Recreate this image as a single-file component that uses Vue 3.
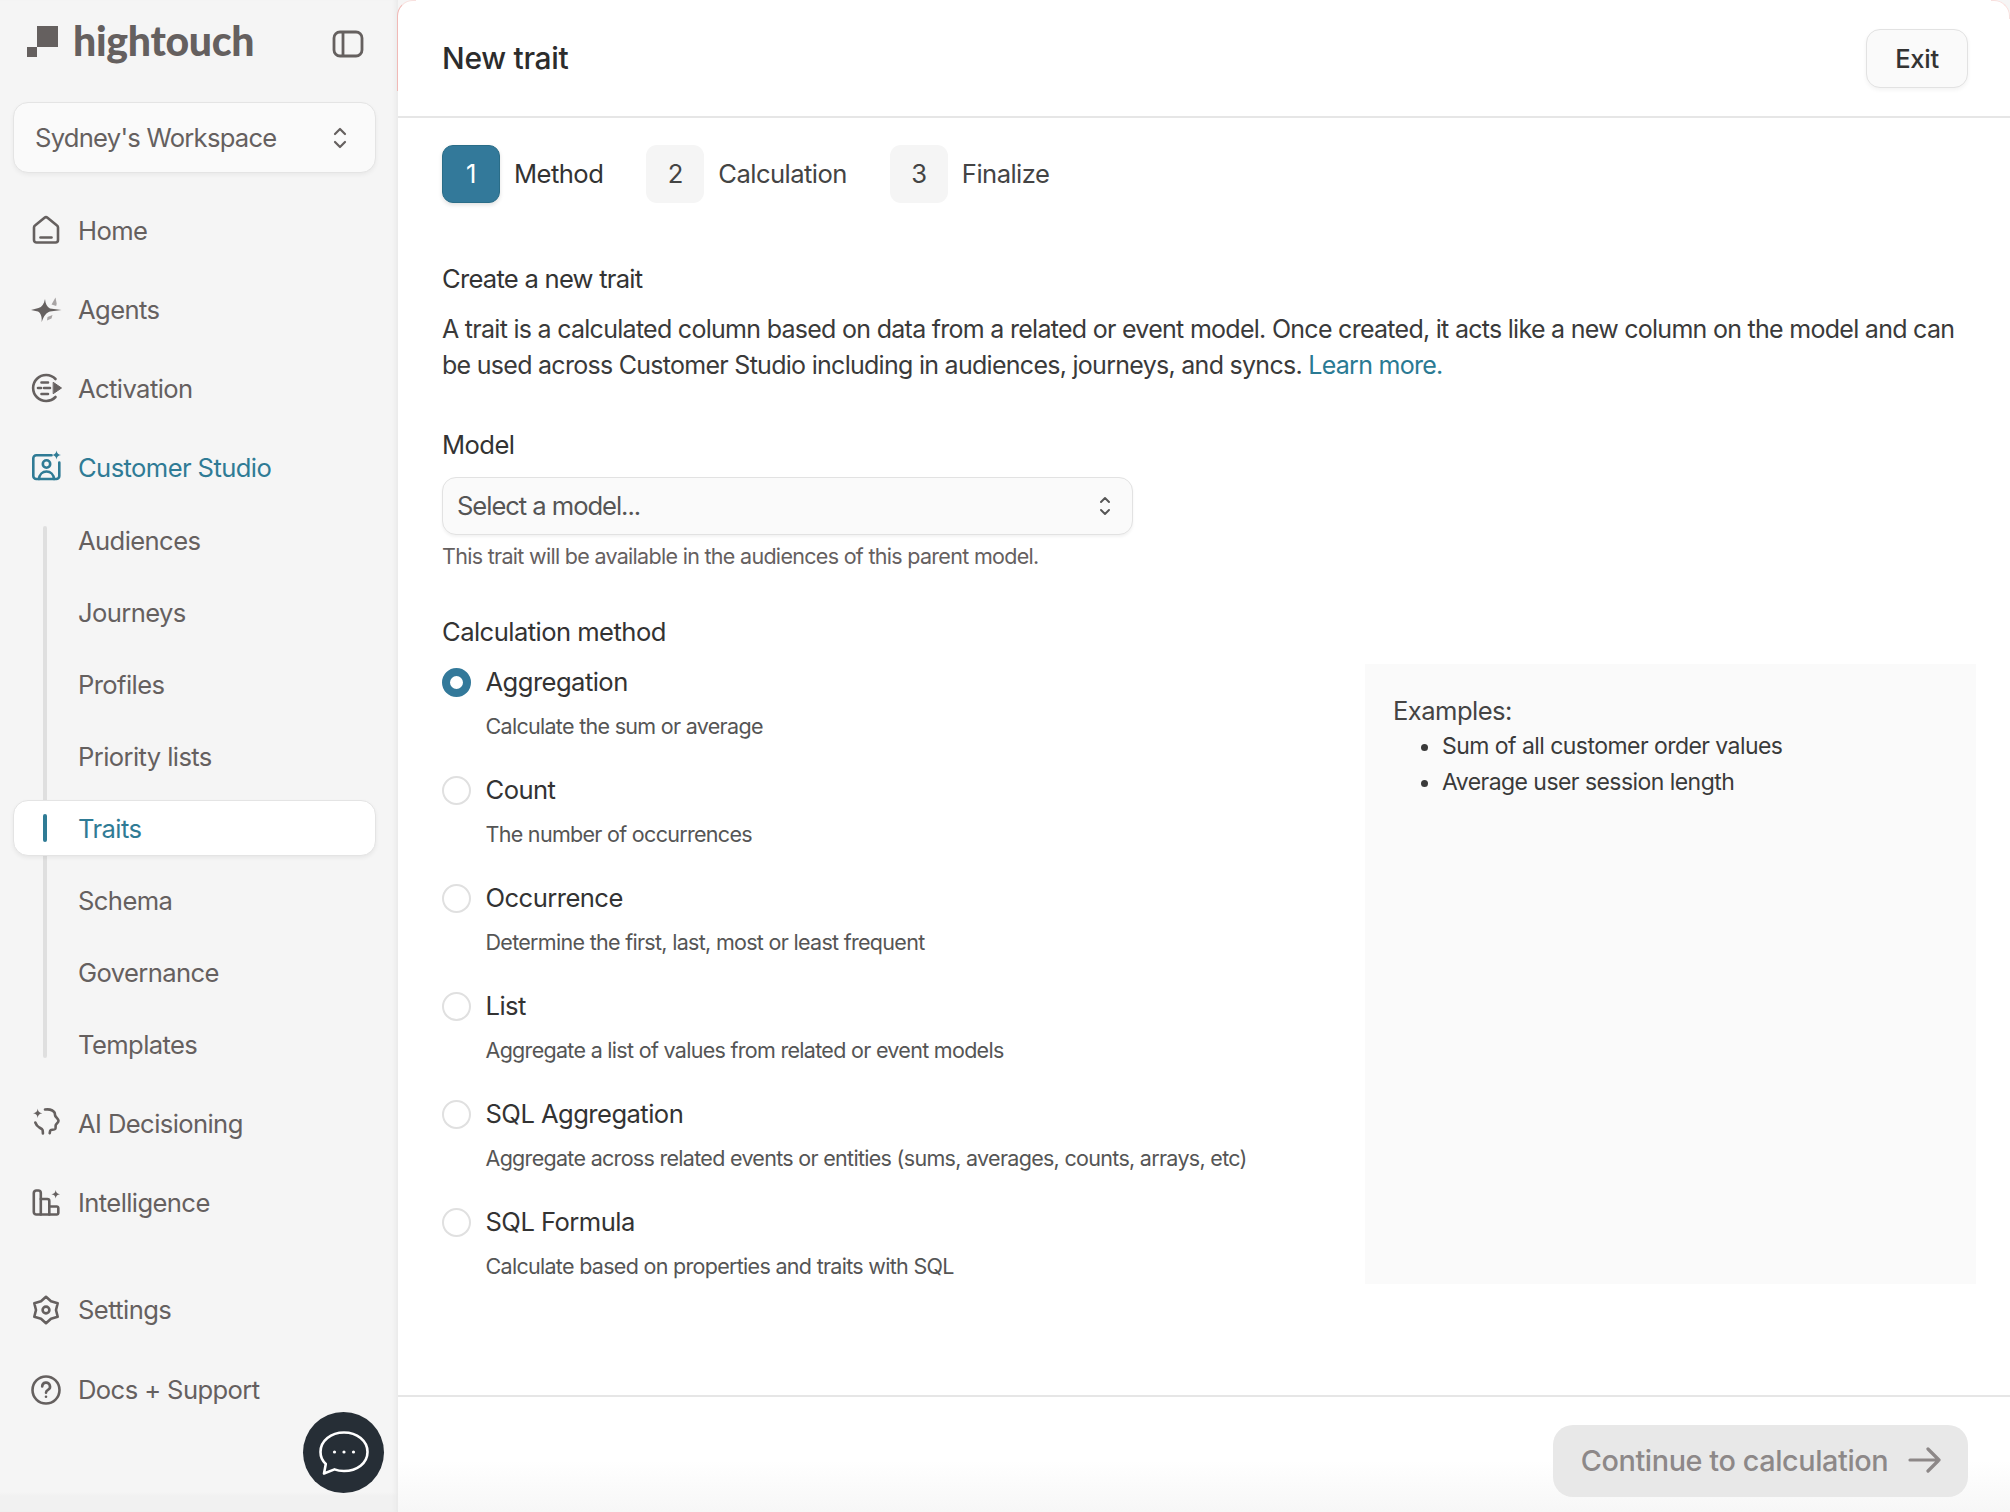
<template>
  <div class="page">
    <aside class="side">
      <div class="brand">
        <svg class="logo" width="32" height="32" viewBox="0 0 32 32">
          <rect x="10" y="0" width="21" height="21" fill="#65605f" />
          <rect x="0" y="21" width="10" height="10" fill="#65605f" />
        </svg>
        <span class="brand-name">hightouch</span>
        <svg class="panel-icon" width="32" height="28" viewBox="0 0 32 28" fill="none" stroke="currentColor" stroke-width="2.8">
          <rect x="2" y="2" width="28" height="24" rx="6" />
          <path d="M11 2v24" />
        </svg>
      </div>

      <button class="workspace">
        <span>Sydney's Workspace</span>
        <svg width="16" height="24" viewBox="0 0 16 24" fill="none" stroke="currentColor" stroke-width="2.2" stroke-linecap="round" stroke-linejoin="round">
          <path d="M3 8l5-5 5 5M3 16l5 5 5-5" />
        </svg>
      </button>

      <nav class="nav">
        <div v-for="item in topItems" :key="item.label" class="nav-row" :class="{ active: item.active }">
          <svg class="nav-icon" width="30" height="30" viewBox="0 0 30 30" fill="none" stroke="currentColor" stroke-width="2.6" stroke-linecap="round" stroke-linejoin="round" v-html="icons[item.icon]"></svg>
          <span>{{ item.label }}</span>
        </div>
        <div class="subnav">
          <div v-for="sub in subItems" :key="sub" class="sub-row" :class="{ current: sub === 'Traits' }">{{ sub }}</div>
        </div>
        <div v-for="item in lowerItems" :key="item.label" class="nav-row">
          <svg class="nav-icon" width="30" height="30" viewBox="0 0 30 30" fill="none" stroke="currentColor" stroke-width="2.6" stroke-linecap="round" stroke-linejoin="round" v-html="icons[item.icon]"></svg>
          <span>{{ item.label }}</span>
        </div>
      </nav>

      <nav class="nav nav-bottom">
        <div v-for="item in bottomItems" :key="item.label" class="nav-row">
          <svg class="nav-icon" width="30" height="30" viewBox="0 0 30 30" fill="none" stroke="currentColor" stroke-width="2.6" stroke-linecap="round" stroke-linejoin="round" v-html="icons[item.icon]"></svg>
          <span>{{ item.label }}</span>
        </div>
      </nav>
    </aside>

    <main class="main">
      <header class="top">
        <h1>New trait</h1>
        <button class="exit">Exit</button>
      </header>

      <section class="content">
        <div class="steps">
          <div v-for="(step, i) in steps" :key="step" class="step" :class="{ on: i === 0 }">
            <span class="step-num">{{ i + 1 }}</span>
            <span>{{ step }}</span>
          </div>
        </div>

        <h2 class="intro-title">Create a new trait</h2>
        <p class="intro">
          A trait is a calculated column based on data from a related or event model. Once created, it acts like a new column on the model and can
          be used across Customer Studio including in audiences, journeys, and syncs. <a class="link">Learn more.</a>
        </p>

        <label class="field-label">Model</label>
        <div class="select">
          <span>Select a model...</span>
          <svg width="14" height="22" viewBox="0 0 14 22" fill="none" stroke="currentColor" stroke-width="1.9" stroke-linecap="round" stroke-linejoin="round">
            <path d="M3 7l4-4 4 4M3 15l4 4 4-4" />
          </svg>
        </div>
        <p class="hint">This trait will be available in the audiences of this parent model.</p>

        <label class="field-label method-label">Calculation method</label>
        <div class="method-grid">
          <div class="options">
            <div v-for="(opt, i) in options" :key="opt.name" class="option">
              <div class="option-head">
                <span class="radio" :class="{ checked: i === 0 }"></span>
                <span>{{ opt.name }}</span>
              </div>
              <div class="option-desc">{{ opt.desc }}</div>
            </div>
          </div>
          <div class="examples">
            <div>Examples:</div>
            <ul>
              <li>Sum of all customer order values</li>
              <li>Average user session length</li>
            </ul>
          </div>
        </div>
      </section>

      <footer class="foot">
        <button class="next">
          <span>Continue to calculation</span>
          <svg width="34" height="26" viewBox="0 0 34 26" fill="none" stroke="currentColor" stroke-width="3.2" stroke-linecap="round" stroke-linejoin="round">
            <path d="M2 13h29M20 2l11 11-11 11" />
          </svg>
        </button>
      </footer>
    </main>

    <button class="chat">
      <svg width="52" height="46" viewBox="0 0 52 46" fill="none" stroke="#fff" stroke-width="2.6" stroke-linejoin="round">
        <path d="M26 2.500c13 0 23.500 8.400 23.500 19.500S39 41 26 41c-3.400 0-6.600-.5-9.500-1.600L6 43.500l1.800-9.500C4 30.500 2.500 26.400 2.500 22 2.500 10.900 13 2.500 26 2.500z" />
        <circle cx="16.500" cy="22" r="1.600" fill="#fff" stroke="none" />
        <circle cx="26" cy="22" r="1.600" fill="#fff" stroke="none" />
        <circle cx="35.500" cy="22" r="1.600" fill="#fff" stroke="none" />
      </svg>
    </button>
  </div>
</template>

<script setup>
// icon bodies, all on a 30x30 box
const icons = {
  home: '<path d="M3 12.500c0-.8.300-1.500 1-2L13.500 2.800a2.400 2.400 0 0 1 3 0L26 10.500c.7.500 1 1.200 1 2V25a2.500 2.500 0 0 1-2.500 2.500h-19A2.500 2.500 0 0 1 3 25z"/><path d="M9.500 22.500h11"/>',
  agents:
    '<path d="M14 5c.5 5 2 8 5 9.500L30.500 16l-11.500 1.500c-3.500 1-6 4-8.300 10.500 .3-5-.5-8.500-3.700-10.500L0 16l7.500-2c3.500-1 5.500-4 6.500-9z" fill="currentColor" stroke="none"/><path d="M24.500 3.500l1.200 6-.5 2.500-4.700-1.500z" fill="#a8a4a4" stroke="none"/><path d="M21.500 21l-1 3.500-4.500 2 .5-3.500z" fill="#a8a4a4" stroke="none"/>',
  activation:
    '<path d="M24.500 5A13 13 0 1 0 24.500 23"/><path d="M22.500 8.500l8 5.500-8 5.500z" fill="currentColor" stroke-width="1"/><path d="M10.500 8.500h6.500M7 14h3M13 14h6M10.500 20h6.500"/>',
  studio:
    '<path d="M20.500 2.300H5.300a3 3 0 0 0-3 3V23a3 3 0 0 0 3 3h20a3 3 0 0 0 3-3V9.500"/><circle cx="15.500" cy="11" r="3.700"/><path d="M8 26c.4-4.500 3.500-7.500 7.500-7.500S22.600 21.500 23 26"/><path d="M25.500 -2.500c.4 2.700 1.500 3.800 4.500 4.500-3 .7-4.100 1.800-4.500 4.500-.4-2.700-1.500-3.800-4.500-4.500 3-.7 4.100-1.800 4.500-4.500z" fill="currentColor" stroke="none"/>',
  ai:
    '<path d="M14 1.500c4-.5 8 .5 9.500 3 .6 1 .3 2.500.8 3.500.8 1.400 3.200 3 3.200 4.700 0 1.800-2.300 3-2.800 4.500-.3 1.200.3 2.800-.5 3.800-.9 1-3.800.5-4.700 1.200-.7.5-.5 2-.8 3"/><path d="M4.300 14.500c.7 2 2 3.800 4 5 1.500.8 3 1.500 3.300 2.500.2 1.200.3 2.500.3 3.500"/><path d="M6.700 .5c.4 3 1.500 4.100 4.700 4.800-3.200.5-4.300 1.700-4.700 4.700-.4-3-1.500-4.200-4.700-4.700 3.200-.7 4.300-1.800 4.700-4.800z" fill="currentColor" stroke="none"/>',
  intel:
    '<path d="M2.800 5a2.500 2.500 0 0 1 2.500-2.500h2a2.500 2.500 0 0 1 2.500 2.500v21.500H5.300a2.500 2.500 0 0 1-2.500-2.500z"/><path d="M9.800 26.500h16a1.500 1.500 0 0 0 1.500-1.500v-5a1.500 1.500 0 0 0-1.500-1.500h-7.300"/><path d="M9.800 11h6.500a2 2 0 0 1 2 2v13.500"/><path d="M24.700 2c.4 2.700 1.500 3.800 4.300 4.300-2.800.5-3.900 1.600-4.300 4.300-.4-2.700-1.500-3.800-4.300-4.300 2.800-.5 3.900-1.600 4.300-4.300z" fill="currentColor" stroke="none"/>',
  settings:
    '<path d="M15 1.800L20 6.300 26.700 8.250 25 15 26.700 21.750 20 23.700 15 28.200 10 23.700 3.300 21.750 5 15 3.300 8.250 10 6.300z"/><circle cx="15" cy="15" r="3.400"/>',
  docs:
    '<circle cx="15" cy="15" r="13.500"/><path d="M11.200 11.500a3.900 3.900 0 1 1 5.800 3.400c-1.300.8-2 1.500-2 2.800"/><circle cx="15" cy="21.800" r="1.300" fill="currentColor" stroke="none"/>',
};

const topItems = [
  { label: "Home", icon: "home" },
  { label: "Agents", icon: "agents" },
  { label: "Activation", icon: "activation" },
  { label: "Customer Studio", icon: "studio", active: true },
];

const subItems = ["Audiences", "Journeys", "Profiles", "Priority lists", "Traits", "Schema", "Governance", "Templates"];

const lowerItems = [
  { label: "AI Decisioning", icon: "ai" },
  { label: "Intelligence", icon: "intel" },
];

const bottomItems = [
  { label: "Settings", icon: "settings" },
  { label: "Docs + Support", icon: "docs" },
];

const steps = ["Method", "Calculation", "Finalize"];

const options = [
  { name: "Aggregation", desc: "Calculate the sum or average" },
  { name: "Count", desc: "The number of occurrences" },
  { name: "Occurrence", desc: "Determine the first, last, most or least frequent" },
  { name: "List", desc: "Aggregate a list of values from related or event models" },
  { name: "SQL Aggregation", desc: "Aggregate across related events or entities (sums, averages, counts, arrays, etc)" },
  { name: "SQL Formula", desc: "Calculate based on properties and traits with SQL" },
];
</script>

<style scoped>
.page {
  position: relative;
  display: flex;
  width: 2010px;
  height: 1512px;
  overflow: hidden;
  background: #f5f5f5;
  font-family: Inter, "Liberation Sans", sans-serif;
  color: #333;
}

button {
  font-family: inherit;
  cursor: pointer;
}

.side {
  width: 398px;
  flex-shrink: 0;
  color: #65605f;
  font-size: 25.6px;
  letter-spacing: -0.6px;
  background: linear-gradient(#f5f5f5 1492px, #f1f1f1 1496px);
  box-shadow: inset -5px 0 4px -3px #e8e8e8;
}

.brand {
  display: flex;
  align-items: center;
  height: 88px;
  padding-left: 27px;
  padding-right: 34px;
}

.logo {
  margin-top: -4px;
}

.brand-name {
  margin-left: 14px;
  font-family: Lato, Inter, sans-serif;
  font-size: 41px;
  font-weight: 900;
  letter-spacing: -0.3px;
  line-height: 1;
  margin-top: -8px;
}

.panel-icon {
  margin-left: auto;
}

.workspace {
  display: flex;
  align-items: center;
  justify-content: space-between;
  width: 363px;
  height: 71px;
  margin: 14px 0 0 13px;
  padding: 0 27px 0 21px;
  border: 1.5px solid #e4e4e4;
  border-radius: 15px;
  background: #fafafa;
  box-shadow: 0 2px 4px rgba(0, 0, 0, 0.05);
  color: inherit;
  font-size: 25.6px;
  letter-spacing: -0.75px;
}

.nav {
  display: flex;
  flex-direction: column;
  gap: 23.3px;
  margin-top: 29px;
}

.nav-bottom {
  gap: 24px;
  margin-top: 51px;
}

.nav-row {
  display: flex;
  align-items: center;
  height: 56px;
  padding-left: 31px;
  gap: 17px;
}

.nav-row.active {
  color: #2f7b95;
}

.nav-icon {
  flex-shrink: 0;
  overflow: visible;
}

.subnav {
  position: relative;
  display: flex;
  flex-direction: column;
  gap: 16px;
  margin-top: -7px;
}

.subnav::before {
  content: "";
  position: absolute;
  left: 43px;
  top: 14px;
  bottom: 14px;
  width: 4px;
  border-radius: 2px;
  background: #dfdfdf;
}

.sub-row {
  position: relative;
  display: flex;
  align-items: center;
  width: 363px;
  height: 56px;
  margin-left: 13px;
  padding-left: 64px;
  box-sizing: border-box;
  border: 1.5px solid transparent;
  border-radius: 15px;
}

.sub-row.current {
  border-color: #e4e4e4;
  background: #fff;
  box-shadow: 0 2px 4px rgba(0, 0, 0, 0.06);
  color: #2f7b95;
}

.sub-row.current::before {
  content: "";
  position: absolute;
  left: 29px;
  top: 13px;
  bottom: 13px;
  width: 4px;
  border-radius: 2px;
  background: #2f7b95;
}

.main {
  position: relative;
  display: flex;
  flex-direction: column;
  flex: 1;
  min-width: 0;
  background: #fff;
  border-radius: 16px 16px 0 0;
}

/* faint red edge on the top corners */
.main::before {
  content: "";
  position: absolute;
  left: -1px;
  top: 0;
  width: 18px;
  height: 90px;
  border-left: 1.5px solid #f1b9b6;
  border-top: 1.5px solid #f8e0de;
  border-top-left-radius: 16px;
}

.main::after {
  content: "";
  position: absolute;
  right: 0;
  top: 0;
  width: 18px;
  height: 18px;
  border-right: 1.5px solid #f8e0de;
  border-top: 1.5px solid #f8e0de;
  border-top-right-radius: 16px;
}

.top {
  display: flex;
  align-items: center;
  justify-content: space-between;
  height: 116px;
  flex-shrink: 0;
  padding: 0 42px 0 44px;
  border-bottom: 2px solid #e6e6e6;
}

.top h1 {
  margin: 0;
  font-size: 30px;
  font-weight: 500;
  letter-spacing: -0.3px;
  color: #2c2c2c;
}

.exit {
  width: 102px;
  height: 59px;
  border: 1.5px solid #e2e2e2;
  border-radius: 14px;
  background: #fafafa;
  box-shadow: 0 2px 4px rgba(0, 0, 0, 0.05);
  color: #333;
  font-size: 25.6px;
  font-weight: 500;
  letter-spacing: -0.3px;
}

.content {
  flex: 1;
  padding: 27px 34px 0 44px;
  font-size: 25.6px;
  letter-spacing: -0.55px;
  line-height: 36px;
}

.steps {
  display: flex;
  gap: 43px;
}

.step {
  display: flex;
  align-items: center;
  gap: 14px;
  color: #444;
}

.step-num {
  display: flex;
  align-items: center;
  justify-content: center;
  width: 58px;
  height: 58px;
  border-radius: 11px;
  background: #f5f5f5;
}

.step.on {
  color: #333;
}

.step.on .step-num {
  background: #33799a;
  border: 1.5px solid #2a6d88;
  box-sizing: border-box;
  box-shadow: 0 2px 4px rgba(0, 0, 0, 0.12);
  color: #fff;
}

.intro-title {
  margin: 58px 0 0;
  font-size: 25.6px;
  font-weight: 400;
  line-height: 36px;
  letter-spacing: -0.75px;
  color: #333;
}

.intro {
  margin: 14px 0 0;
  font-size: 25px;
  letter-spacing: -0.72px;
  color: #3a3a3a;
}

.link {
  color: #2a7a93;
}

.field-label {
  display: block;
  margin-top: 44px;
  color: #333;
}

.select {
  display: flex;
  align-items: center;
  justify-content: space-between;
  box-sizing: border-box;
  width: 691px;
  height: 58px;
  margin-top: 14px;
  padding: 0 20px 0 14px;
  border: 1.5px solid #e2e2e2;
  border-radius: 14px;
  background: #fafafa;
  box-shadow: 0 2px 3px rgba(0, 0, 0, 0.05);
  color: #555;
  letter-spacing: -1.05px;
}

.hint {
  margin: 3px 0 0;
  font-size: 21.5px;
  letter-spacing: -0.7px;
  color: #65605f;
}

.method-label {
  margin-top: 40px;
}

.method-grid {
  display: grid;
  grid-template-columns: 923px 611px;
  margin-top: 14px;
}

.options {
  display: flex;
  flex-direction: column;
  gap: 28px;
}

.option-head {
  display: flex;
  align-items: center;
  gap: 14.5px;
  color: #333;
}

.radio {
  box-sizing: border-box;
  width: 29px;
  height: 29px;
  border: 2px solid #e0e0e0;
  border-radius: 50%;
  background: #fff;
}

.radio.checked {
  border: 8px solid #33799a;
}

.option-desc {
  margin-top: 8px;
  padding-left: 43.5px;
  font-size: 21.5px;
  letter-spacing: -0.7px;
  color: #555;
}

.examples {
  padding: 29px 28px;
  background: #fafafa;
  color: #444;
}

.examples ul {
  margin: -1px 0 0;
  padding-left: 49px;
}

.examples li {
  font-size: 23px;
  letter-spacing: -0.55px;
  color: #3a3a3a;
}

.foot {
  display: flex;
  justify-content: flex-end;
  height: 117px;
  flex-shrink: 0;
  box-sizing: border-box;
  padding: 28px 42px 0 0;
  border-top: 2px solid #e6e6e6;
  background: linear-gradient(#fff 55%, #f7f7f7);
}

.next {
  display: flex;
  align-items: center;
  justify-content: center;
  gap: 20px;
  width: 415px;
  height: 72px;
  padding: 0 0 2px 2px;
  border: none;
  border-radius: 20px;
  background: #e8e8e8;
  color: #8d8888;
  font-size: 28.800px;
  font-weight: 500;
  letter-spacing: -0.4px;
}

.chat {
  position: absolute;
  left: 303px;
  top: 1412px;
  display: flex;
  align-items: center;
  justify-content: center;
  width: 81px;
  height: 81px;
  padding: 0;
  border: none;
  border-radius: 50%;
  background: #262e36;
}
</style>
